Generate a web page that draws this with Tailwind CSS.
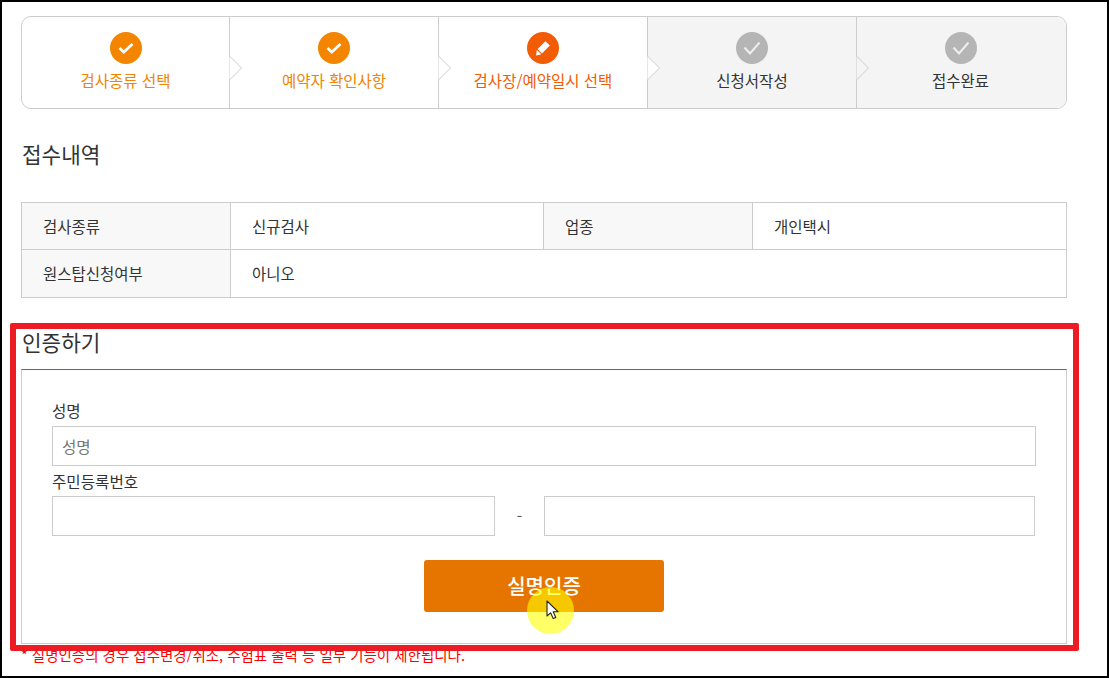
<!DOCTYPE html>
<html lang="ko">
<head>
  <meta charset="UTF-8" />
  <meta name="viewport" content="width=device-width, initial-scale=1" />
  <title>인증하기</title>
  <script src="https://cdn.jsdelivr.net/npm/@tailwindcss/browser@4"></script>
</head>
<body class="relative h-[678px] overflow-hidden bg-white border-2 border-black text-[#333] font-['Noto_Sans_CJK_KR','Noto_Sans',sans-serif]">

  <main class="w-[1046px] ml-[19px] pt-[14px]">

    <!-- Steps -->
    <ol class="grid grid-cols-[207px_209px_209px_209px_1fr] h-[93px] border border-[#ccc] rounded-[10px] overflow-hidden text-[15.5px]">
      <li class="flex flex-col items-center pt-[15px] text-[#f08300]">
        <span class="w-8 h-8 rounded-full bg-[#f48500] flex items-center justify-center">
          <svg width="16" height="16" viewBox="0 0 16 16" fill="none" stroke="#fff" stroke-width="2.8"><path d="M1.5 8l4.3 4 8.7-8" /></svg>
        </span>
        <span class="mt-[4px] leading-[24px]">검사종류 선택</span>
      </li>
      <li class="relative border-l border-[#ccc] flex flex-col items-center pt-[15px] text-[#f08300]">
        <svg class="absolute left-[-1px] top-[38px]" width="14" height="26" viewBox="0 0 14 26"><path d="M.5 1l12 12-12 12" fill="#fff" stroke="#ccc" /></svg>
        <span class="w-8 h-8 rounded-full bg-[#f48500] flex items-center justify-center">
          <svg width="16" height="16" viewBox="0 0 16 16" fill="none" stroke="#fff" stroke-width="2.8"><path d="M1.5 8l4.3 4 8.7-8" /></svg>
        </span>
        <span class="mt-[4px] leading-[24px]">예약자 확인사항</span>
      </li>
      <li class="relative border-l border-[#ccc] flex flex-col items-center pt-[15px] text-[#f25c05]">
        <svg class="absolute left-[-1px] top-[38px]" width="14" height="26" viewBox="0 0 14 26"><path d="M.5 1l12 12-12 12" fill="#fff" stroke="#ccc" /></svg>
        <span class="w-8 h-8 rounded-full bg-[#f25c05] flex items-center justify-center">
          <svg width="16" height="16" viewBox="0 0 16 16" fill="#fff"><path d="M10.4 1.2l4.4 4.4-7.8 7.8-4.4-4.4zM1.9 10l4.1 4.1-.6.6-4.4.8z" /></svg>
        </span>
        <span class="mt-[4px] leading-[24px]">검사장/예약일시 선택</span>
      </li>
      <li class="relative border-l border-[#ccc] bg-[#f4f4f4] flex flex-col items-center pt-[15px] text-[#333]">
        <svg class="absolute left-[-1px] top-[38px]" width="14" height="26" viewBox="0 0 14 26"><path d="M.5 1l12 12-12 12" fill="#fff" stroke="#ccc" /></svg>
        <span class="w-8 h-8 rounded-full bg-[#b5b5b5] flex items-center justify-center">
          <svg width="18" height="16" viewBox="0 0 18 16" fill="none" stroke="#eee" stroke-width="2"><path d="M1.5 7.5l5.5 6L16.5 2.5" /></svg>
        </span>
        <span class="mt-[4px] leading-[24px]">신청서작성</span>
      </li>
      <li class="relative border-l border-[#ccc] bg-[#f4f4f4] flex flex-col items-center pt-[15px] pr-[2px] text-[#333]">
        <svg class="absolute left-[-1px] top-[38px]" width="14" height="26" viewBox="0 0 14 26"><path d="M.5 1l12 12-12 12" fill="#f4f4f4" stroke="#ccc" /></svg>
        <span class="w-8 h-8 rounded-full bg-[#b5b5b5] flex items-center justify-center">
          <svg width="18" height="16" viewBox="0 0 18 16" fill="none" stroke="#eee" stroke-width="2"><path d="M1.5 7.5l5.5 6L16.5 2.5" /></svg>
        </span>
        <span class="mt-[4px] leading-[24px]">접수완료</span>
      </li>
    </ol>

    <!-- Summary -->
    <h2 class="mt-[28px] pl-px text-[21.3px] leading-[34px] font-normal">접수내역</h2>
    <table class="mt-[31px] w-[1046px] table-fixed border-collapse text-[15.5px]">
      <colgroup>
        <col class="w-[209px]" />
        <col class="w-[313px]" />
        <col class="w-[209px]" />
        <col />
      </colgroup>
      <tr class="h-[47px]">
        <th class="border border-[#ccc] bg-[#f8f8f8] pl-[21px] pt-px text-left font-normal">검사종류</th>
        <td class="border border-[#ccc] pl-[21px] pt-px">신규검사</td>
        <th class="border border-[#ccc] bg-[#f8f8f8] pl-[21px] pt-px text-left font-normal">업종</th>
        <td class="border border-[#ccc] pl-[21px] pt-px">개인택시</td>
      </tr>
      <tr class="h-[48px]">
        <th class="border border-[#ccc] bg-[#f8f8f8] pl-[21px] text-left font-normal">원스탑신청여부</th>
        <td class="border border-[#ccc] pl-[21px]" colspan="3">아니오</td>
      </tr>
    </table>

    <!-- Auth -->
    <h2 class="mt-[27px] pl-px text-[21.3px] leading-[34px] font-normal">인증하기</h2>
    <section class="mt-[10px] h-[275px] border border-[#ccc] border-t-[#666] px-[30px] pt-[28px] text-[15.6px]">
      <label class="block leading-[24px]" for="name">성명</label>
      <input id="name" class="block w-[984px] h-[40px] mt-[4px] border border-[#ccc] px-[9px] text-[15.6px] placeholder:text-[#757575]" placeholder="성명" />
      <label class="block mt-[2px] leading-[26px]" for="rrn1">주민등록번호</label>
      <div class="flex items-center mt-[2px]">
        <input id="rrn1" class="w-[443px] h-[40px] border border-[#ccc]" />
        <span class="w-[49px] text-center text-[#555]">-</span>
        <input class="w-[491px] h-[40px] border border-[#ccc]" />
      </div>
      <button class="block mx-auto mt-[24px] w-[240px] h-[52px] rounded-[3px] bg-[#e67500] text-white text-[20px] font-medium">실명인증</button>
    </section>
    <p class="mt-[1px] text-[14.5px] leading-[20px] text-[#f00]">* 실명인증의 경우 접수변경/취소, 수험표 출력 등 일부 기능이 제한됩니다.</p>
  </main>

  <!-- Annotation overlay -->
  <div class="absolute left-[8px] top-[321px] w-[1069px] h-[328px] border-[6px] border-[#ed1c24] rounded-[2px]"></div>
  <div class="absolute left-[525px] top-[585px] w-[47px] h-[47px] rounded-full bg-[#ffff00]/60"></div>
  <svg class="absolute left-[544px] top-[598px]" width="14" height="20" viewBox="0 0 14 20"><path d="M1 1v15l3.6-3.2 2.6 5.8 2.6-1.2-2.6-5.6h5z" fill="#fff" stroke="#222" stroke-width="1.1" stroke-linejoin="round" /></svg>

</body>
</html>
